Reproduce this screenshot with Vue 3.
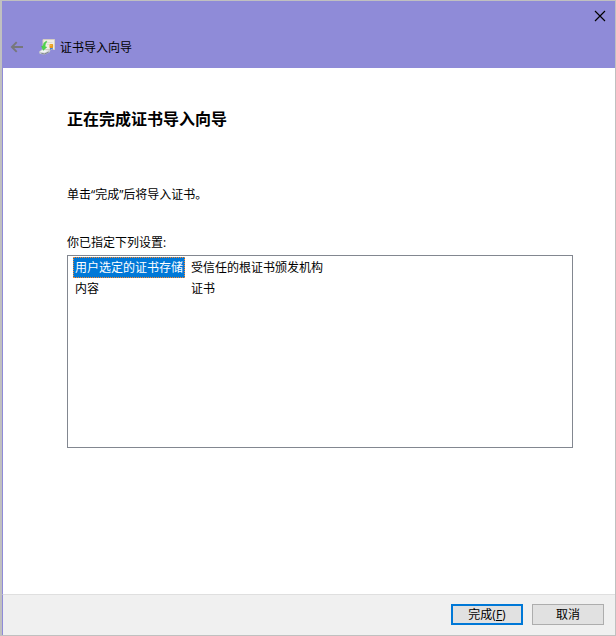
<script setup>
const settings = [
  { name: '用户选定的证书存储', value: '受信任的根证书颁发机构', selected: true },
  { name: '内容', value: '证书', selected: false },
]
</script>

<template>
  <div class="window">
    <header class="titlebar">
      <div class="caption">
        <svg class="close" width="12" height="12" viewBox="0 0 12 12">
          <path d="M1 1 L11 11 M11 1 L1 11" fill="none" stroke="#000" stroke-width="1.15" />
        </svg>
      </div>
      <div class="heading">
        <svg class="back" width="14" height="12" viewBox="0 0 14 12">
          <path d="M13 6 H2 M6.7 1.2 L1.9 6 L6.7 10.8" fill="none" stroke="#77777b" stroke-width="1.9" />
        </svg>
        <svg class="cert" width="16" height="16" viewBox="0 0 16 16">
          <path d="M4 .5 H15.5 V10.5 H4 Z" fill="#f1eee4" stroke="#d6cfc2" />
          <path d="M7 3.5 H13.5 M8 5.5 H10" stroke="#e0ddd3" stroke-width="1" />
          <path d="M0 12.7 L3 10.2 L11.5 11 L10.6 13.2 L5.5 15.8 L.6 14.8 Z" fill="#c9cdcf" />
          <path d="M.8 12.7 L3.6 11 L10 11.6 L5.4 13.8 Z" fill="#f2f4f4" />
          <path d="M2.4 14.4 L5.6 15 L9.6 13.1" fill="none" stroke="#777e84" stroke-width=".9" />
          <path d="M7.6 2 C5 3 4.2 4.8 4 7 L2.4 7 L4.2 11.4 L7.9 8.2 L6.2 7.6 C6.2 5.6 6.6 4 7.9 3 Z" fill="#4fd34b" stroke="#3bbc43" stroke-width=".3" />
          <path d="M10.9 8 V11 L12.4 10.3 L13.8 10.8 V8 Z" fill="#4a7fd0" />
          <rect x="10.5" y="5" width="3.6" height="4" rx=".8" fill="#e99a1c" />
          <rect x="11.2" y="5.6" width="1.4" height="1.4" fill="#f9bd48" />
        </svg>
        <span class="name">证书导入向导</span>
      </div>
    </header>

    <main class="content">
      <h1>正在完成证书导入向导</h1>
      <p class="hint">单击“完成”后将导入证书。</p>
      <p class="label">你已指定下列设置:</p>
      <div class="list">
        <div v-for="row in settings" :key="row.name" class="row">
          <div class="key-cell">
            <span class="key" :class="{ selected: row.selected }">{{ row.name }}</span>
          </div>
          <span class="value">{{ row.value }}</span>
        </div>
      </div>
    </main>

    <footer class="actions">
      <button class="btn primary">完成(<u>F</u>)</button>
      <button class="btn">取消</button>
    </footer>
  </div>
</template>

<style>
body {
  margin: 0;
  overflow: hidden;
}
</style>

<style scoped>
.window {
  box-sizing: border-box;
  width: 616px;
  height: 636px;
  display: flex;
  flex-direction: column;
  border: 1px solid #c0c0c0;
  border-left-width: 2px;
  background: #fff;
  color: #000;
  font: 12px/16px "Open Sans", "Noto Sans CJK SC", sans-serif;
}
.titlebar {
  height: 67px;
  flex: none;
  background: #8f8bd8;
}
.caption {
  height: 30px;
  display: flex;
  justify-content: flex-end;
  align-items: center;
  padding-right: 9px;
}
.close {
  display: block;
}
.heading {
  display: flex;
  align-items: center;
  height: 32px;
  padding-left: 8px;
}
.cert {
  margin-left: 15px;
}
.name {
  margin-left: 5px;
  padding-top: 2px;
}
.content {
  flex: 1;
  border-left: 1px solid #8f8bd8;
  padding: 39px 42px 0 64px;
}
h1 {
  margin: 0;
  font-size: 16px;
  line-height: 24px;
  font-weight: 700;
}
p {
  margin: 0;
}
.hint {
  margin-top: 56px;
}
.label {
  margin-top: 32px;
}
.list {
  box-sizing: border-box;
  height: 193px;
  margin-top: 4px;
  padding: 1px 5px;
  border: 1px solid #828790;
}
.row {
  display: flex;
  height: 21px;
  line-height: 21px;
}
.key-cell {
  width: 118px;
}
.key {
  box-sizing: border-box;
  display: inline-block;
  height: 21px;
  line-height: 19px;
  padding: 0 1px;
  border: 1px solid transparent;
  white-space: nowrap;
}
.selected {
  background: #0078d7;
  border: 1px dotted #ff8728;
  color: #fff;
}
.actions {
  box-sizing: border-box;
  height: 41px;
  flex: none;
  display: flex;
  justify-content: flex-end;
  align-items: flex-start;
  gap: 9px;
  padding: 9px 11px 0 0;
  border-top: 1px solid #dfdfdf;
  border-left: 1px solid #8f8bd8;
  background: #f0f0f0;
}
.btn {
  box-sizing: border-box;
  width: 72px;
  height: 21px;
  padding: 0;
  border: 1px solid #adadad;
  border-radius: 0;
  background: #e1e1e1;
  color: #000;
  font: inherit;
  line-height: 17px;
}
.primary {
  border: 2px solid #0078d7;
}
</style>
